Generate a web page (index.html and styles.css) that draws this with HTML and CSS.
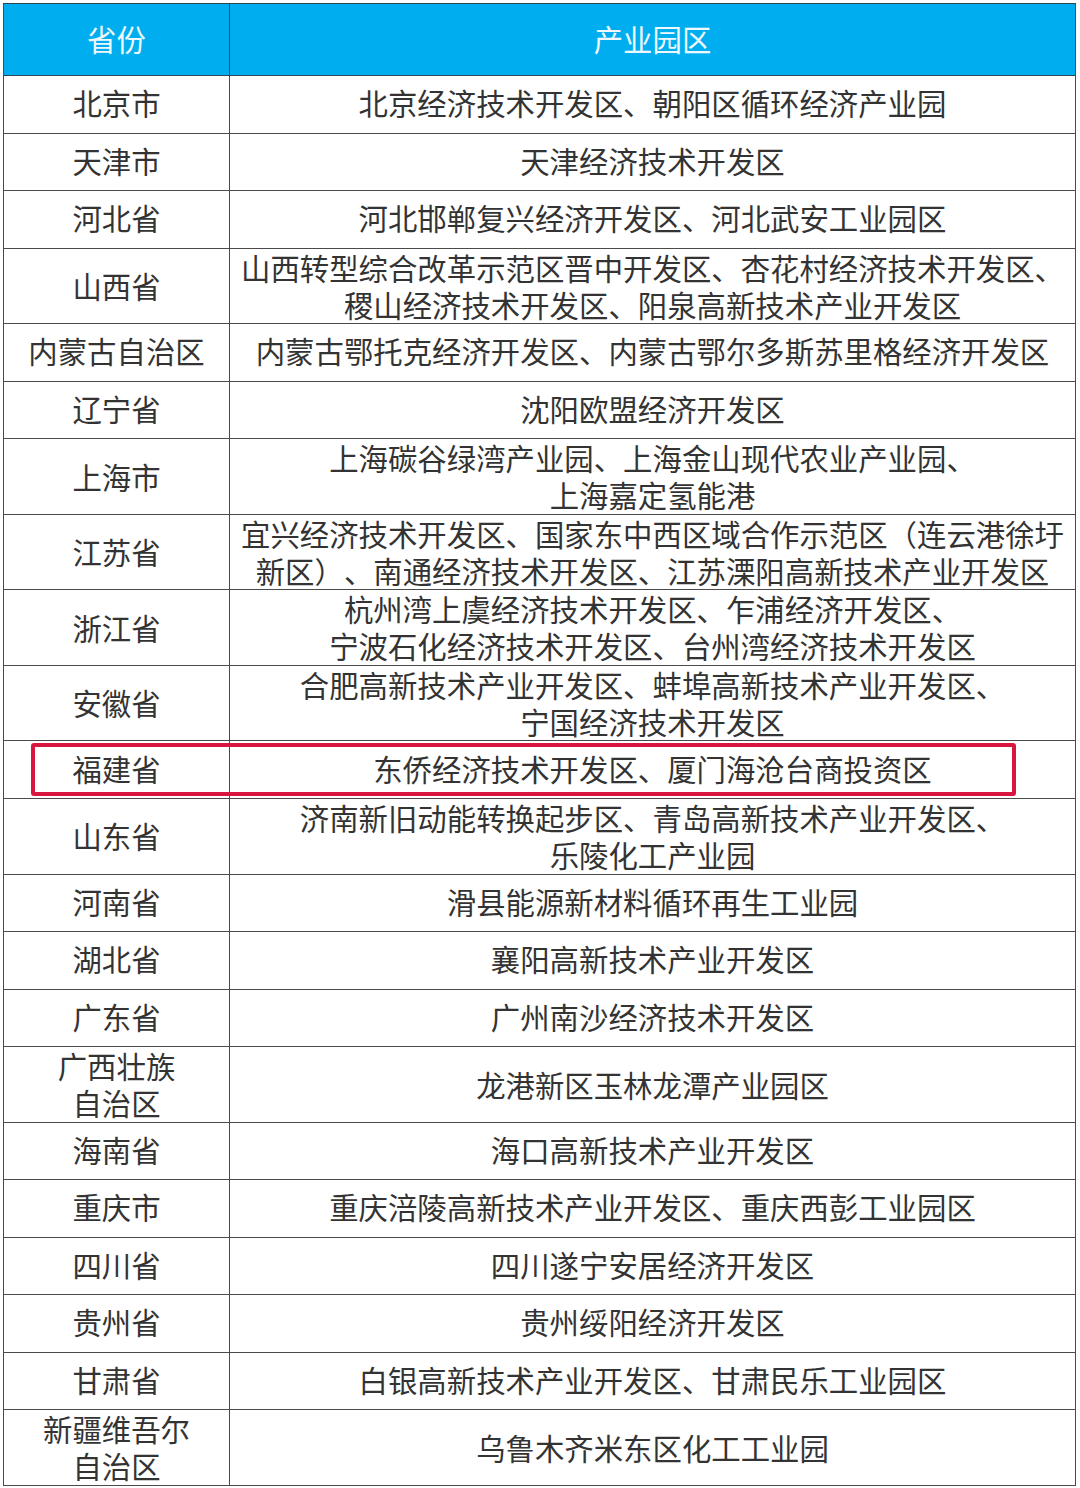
FILE: index.html
```html
<!DOCTYPE html>
<html lang="zh-CN">
<head>
<meta charset="utf-8">
<title>产业园区</title>
<link rel="stylesheet" href="styles.css">
</head>
<body>
<div class="table">
  <div class="row head"><div class="cell">省份</div><div class="cell">产业园区</div></div>
  <div class="row s"><div class="cell">北京市</div><div class="cell">北京经济技术开发区、朝阳区循环经济产业园</div></div>
  <div class="row s"><div class="cell">天津市</div><div class="cell">天津经济技术开发区</div></div>
  <div class="row s"><div class="cell">河北省</div><div class="cell">河北邯郸复兴经济开发区、河北武安工业园区</div></div>
  <div class="row d"><div class="cell">山西省</div><div class="cell">山西转型综合改革示范区晋中开发区、杏花村经济技术开发区、<br>稷山经济技术开发区、阳泉高新技术产业开发区</div></div>
  <div class="row s"><div class="cell">内蒙古自治区</div><div class="cell">内蒙古鄂托克经济开发区、内蒙古鄂尔多斯苏里格经济开发区</div></div>
  <div class="row s"><div class="cell">辽宁省</div><div class="cell">沈阳欧盟经济开发区</div></div>
  <div class="row d"><div class="cell">上海市</div><div class="cell">上海碳谷绿湾产业园、上海金山现代农业产业园、<br>上海嘉定氢能港</div></div>
  <div class="row d"><div class="cell">江苏省</div><div class="cell">宜兴经济技术开发区、国家东中西区域合作示范区（连云港徐圩<br>新区）、南通经济技术开发区、江苏溧阳高新技术产业开发区</div></div>
  <div class="row d"><div class="cell">浙江省</div><div class="cell">杭州湾上虞经济技术开发区、乍浦经济开发区、<br>宁波石化经济技术开发区、台州湾经济技术开发区</div></div>
  <div class="row d"><div class="cell">安徽省</div><div class="cell">合肥高新技术产业开发区、蚌埠高新技术产业开发区、<br>宁国经济技术开发区</div></div>
  <div class="row s mark"><div class="cell">福建省</div><div class="cell">东侨经济技术开发区、厦门海沧台商投资区</div><div class="highlight"></div></div>
  <div class="row d"><div class="cell">山东省</div><div class="cell">济南新旧动能转换起步区、青岛高新技术产业开发区、<br>乐陵化工产业园</div></div>
  <div class="row s"><div class="cell">河南省</div><div class="cell">滑县能源新材料循环再生工业园</div></div>
  <div class="row s"><div class="cell">湖北省</div><div class="cell">襄阳高新技术产业开发区</div></div>
  <div class="row s"><div class="cell">广东省</div><div class="cell">广州南沙经济技术开发区</div></div>
  <div class="row d"><div class="cell">广西壮族<br>自治区</div><div class="cell">龙港新区玉林龙潭产业园区</div></div>
  <div class="row s"><div class="cell">海南省</div><div class="cell">海口高新技术产业开发区</div></div>
  <div class="row s"><div class="cell">重庆市</div><div class="cell">重庆涪陵高新技术产业开发区、重庆西彭工业园区</div></div>
  <div class="row s"><div class="cell">四川省</div><div class="cell">四川遂宁安居经济开发区</div></div>
  <div class="row s"><div class="cell">贵州省</div><div class="cell">贵州绥阳经济开发区</div></div>
  <div class="row s"><div class="cell">甘肃省</div><div class="cell">白银高新技术产业开发区、甘肃民乐工业园区</div></div>
  <div class="row d"><div class="cell">新疆维吾尔<br>自治区</div><div class="cell">乌鲁木齐米东区化工工业园</div></div>
</div>
</body>
</html>
```

FILE: styles.css
```css
html, body {
  margin: 0;
  padding: 0;
  background: #ffffff;
}

body {
  font-family: "Noto Sans CJK SC", "Noto Sans", sans-serif;
  font-size: 29.4px;
  color: #333333;
  text-spacing-trim: space-all;
}

.table {
  margin: 3px 0 0 3px;
  width: 1073px;
  border: 1px solid #4a4a4a;
  border-top-color: #2c4657;
  box-sizing: border-box;
}

.row {
  display: grid;
  grid-template-columns: 225px 1fr;
  border-top: 1px solid #4a4a4a;
  box-sizing: border-box;
  position: relative;
}

.row.head {
  border-top: none;
  height: 71px;
  background: #00aeef;
  color: #eef8fd;
}

.row.s {
  height: 57.5px;
}

.row.d {
  height: 75.6px;
}

.row.head + .row {
  border-top-color: #2c4657;
}

.cell {
  display: flex;
  align-items: center;
  justify-content: center;
  text-align: center;
  line-height: 37px;
  white-space: nowrap;
  padding-bottom: 3px;
  box-sizing: border-box;
}

.cell + .cell {
  border-left: 1px solid #4a4a4a;
}

.row.head .cell + .cell {
  border-left-color: #2c4657;
}

.highlight {
  position: absolute;
  left: 27px;
  top: 2px;
  width: 985px;
  height: 53px;
  border: 4px solid #d8163f;
  border-radius: 3px;
  box-sizing: border-box;
  pointer-events: none;
}
```
